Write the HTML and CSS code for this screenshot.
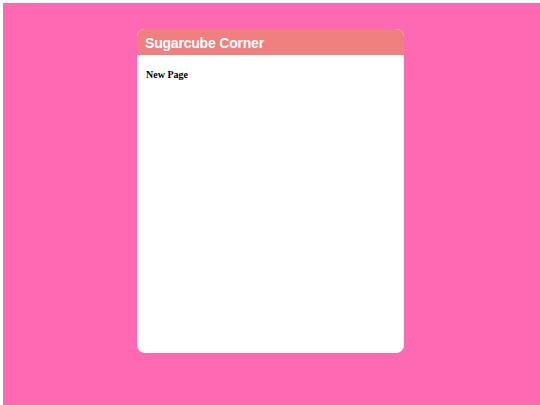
FILE: index.html
```html
<!DOCTYPE html>
<html>
<head>
<meta charset="utf-8">
<link rel="stylesheet" href="styles.css">
</head>
<body>
<div class="page">
  <div class="card">
    <div class="card-header"><span class="title">Sugarcube Corner</span></div>
    <div class="card-body">
      <h3 class="page-title">New Page</h3>
    </div>
  </div>
</div>
</body>
</html>
```
FILE: styles.css
```css
html, body {
  background: #ffffff;
}
body {
  margin: 3px 0 0 3px;
  overflow: hidden;
  font-family: "Liberation Serif", serif;
}
.page {
  background: #ff69b4;
  height: 402px;
  padding: 26px 2px 0 0;
  box-sizing: border-box;
  display: flex;
  justify-content: center;
  align-items: flex-start;
}
.card {
  width: 267px;
  height: 324px;
  background: #ffffff;
  border-radius: 8px;
  overflow: hidden;
  display: flex;
  flex-direction: column;
}
.card-header {
  height: 26px;
  background: #f08080;
  display: flex;
  align-items: center;
  padding: 2px 8px 0;
  box-sizing: border-box;
}
.title {
  color: #ffffff;
  font-family: "Comic Sans MS", "Liberation Sans", sans-serif;
  font-weight: bold;
  font-size: 14px;
  letter-spacing: -0.2px;
}
.card-body {
  padding: 14px 9px;
}
.page-title {
  margin: 0;
  font-family: "Liberation Serif", serif;
  font-weight: bold;
  font-size: 10px;
  color: #000000;
}
```
